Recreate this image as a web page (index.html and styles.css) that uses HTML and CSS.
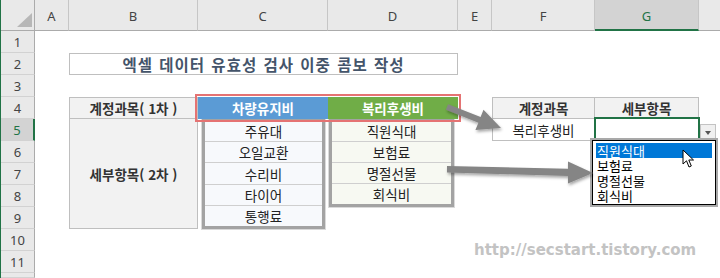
FILE: index.html
```html
<!DOCTYPE html>
<html lang="ko">
<head>
  <meta charset="UTF-8" />
  <title>엑셀 데이터 유효성 검사 이중 콤보 작성</title>
  <link rel="stylesheet" href="styles.css">
</head>
<body>

  <div class="sheet">
    <!-- column headers -->
    <div class="corner"><span class="tri"></span></div>
    <div class="colhead">A</div>
    <div class="colhead">B</div>
    <div class="colhead">C</div>
    <div class="colhead">D</div>
    <div class="colhead">E</div>
    <div class="colhead">F</div>
    <div class="colhead active">G</div>
    <div class="colhead filler"></div>

    <!-- row headers -->
    <div class="rowhead r1">1</div>
    <div class="rowhead r2">2</div>
    <div class="rowhead r3">3</div>
    <div class="rowhead r4">4</div>
    <div class="rowhead r5 active">5</div>
    <div class="rowhead r6">6</div>
    <div class="rowhead r7">7</div>
    <div class="rowhead r8">8</div>
    <div class="rowhead r9">9</div>
    <div class="rowhead r10">10</div>
    <div class="rowhead r11">11</div>
    <div class="rowhead r12"></div>

    <div class="title">엑셀 데이터 유효성 검사 이중 콤보 작성</div>

    <div class="cell label lvl1">계정과목( 1차 )</div>
    <div class="cell label lvl2">세부항목( 2차 )</div>

    <div class="heads">
      <div class="cell head blue">차량유지비</div>
      <div class="cell head green">복리후생비</div>
    </div>

    <div class="list list-c">
      <div class="item">주유대</div>
      <div class="item">오일교환</div>
      <div class="item">수리비</div>
      <div class="item">타이어</div>
      <div class="item">통행료</div>
    </div>

    <div class="list list-d">
      <div class="item">직원식대</div>
      <div class="item">보험료</div>
      <div class="item">명절선물</div>
      <div class="item">회식비</div>
    </div>

    <div class="cell label f4">계정과목</div>
    <div class="cell label g4">세부항목</div>
    <div class="cell f5">복리후생비</div>
    <div class="cell g5">
      <span class="dd-btn"><span class="dd-caret"></span></span>
      <div class="dropdown">
        <div class="opt sel">직원식대</div>
        <div class="opt">보험료</div>
        <div class="opt">명절선물</div>
        <div class="opt">회식비</div>
      </div>
      <svg class="cursor" width="13" height="20" viewBox="0 0 13 20">
        <path d="M1 1 L1 15 L4.5 11.8 L7 18 L9.3 17 L6.8 11 L11.5 11 Z" fill="#fff" stroke="#000" stroke-width="1" stroke-linejoin="round"/>
      </svg>
    </div>

    <svg class="arrows" width="720" height="278" viewBox="0 0 720 278">
      <defs>
        <filter id="sh" x="-20%" y="-40%" width="140%" height="180%">
          <feDropShadow dx="1" dy="2" stdDeviation="1.5" flood-color="#000" flood-opacity="0.35"/>
        </filter>
      </defs>
      <polygon filter="url(#sh)" fill="#858585"
        points="448.1,104.2 480.6,117.1 483.5,109.7 501,128 475.4,130.1 478.4,122.7 445.9,109.8"/>
      <polygon filter="url(#sh)" fill="#858585"
        points="447,166 568,168.8 568,161.5 593,173 568,183.5 568,176 447,172.5"/>
    </svg>

    <div class="watermark">http://secstart.tistory.com</div>
  </div>

</body>
</html>
```

FILE: styles.css
```css
:root {
  --head-bg: #e9e9e9;
  --head-line: #c6c6c6;
  --cell-line: #bfbfbf;
  --excel-green: #217346;
}

* {
  box-sizing: border-box;
}

body {
  margin: 0;
  background: #fff;
  font-family: "Noto Sans CJK KR", "Noto Sans", sans-serif;
}

.sheet {
  position: relative;
  width: 720px;
  height: 278px;
  overflow: hidden;
  display: grid;
  grid-template-columns: 34px 34px 129px 130px 130px 34px 103px 104px 1fr;
  grid-template-rows: 31px repeat(11, 22px) 1fr;
  border-left: 1px solid var(--excel-green);
  color: #222;
}

/* headers */
.corner,
.colhead {
  background: var(--head-bg);
  border-right: 1px solid var(--head-line);
  border-bottom: 1px solid #ababab;
  font-family: "Noto Sans", sans-serif;
  font-size: 13px;
  color: #444;
  display: flex;
  align-items: center;
  justify-content: center;
  padding-top: 2px;
}

.corner {
  position: relative;
  border-right: 1px solid #ababab;
}

.tri {
  position: absolute;
  right: 2px;
  bottom: 3px;
  width: 0;
  height: 0;
  border-left: 15px solid transparent;
  border-bottom: 14px solid #b7b7b7;
}

.colhead.active {
  background: #d3d3d3;
  color: var(--excel-green);
  border-bottom: 2px solid var(--excel-green);
}

.colhead.filler {
  border-right: none;
}

.rowhead {
  grid-column: 1;
  background: var(--head-bg);
  border-right: 1px solid #ababab;
  border-bottom: 1px solid #d2d2d2;
  font-family: "Noto Sans", sans-serif;
  font-size: 13px;
  color: #444;
  display: flex;
  align-items: center;
  justify-content: center;
}

.rowhead.active {
  background: #d3d3d3;
  color: var(--excel-green);
  border-right: 2px solid var(--excel-green);
}

.r1 { grid-row: 2; }
.r2 { grid-row: 3; }
.r3 { grid-row: 4; }
.r4 { grid-row: 5; }
.r5 { grid-row: 6; }
.r6 { grid-row: 7; }
.r7 { grid-row: 8; }
.r8 { grid-row: 9; }
.r9 { grid-row: 10; }
.r10 { grid-row: 11; }
.r11 { grid-row: 12; }
.r12 { grid-row: 13; }

/* cells */
.cell {
  display: flex;
  align-items: center;
  justify-content: center;
  font-size: 13.5px;
  white-space: nowrap;
}

.title {
  grid-row: 3;
  grid-column: 3 / 6;
  border: 1px solid var(--cell-line);
  display: flex;
  align-items: center;
  justify-content: center;
  font-size: 15.5px;
  font-weight: 700;
  letter-spacing: 1px;
  word-spacing: 1px;
  color: #44546a;
}

.label {
  background: #f2f2f2;
  border: 1px solid var(--cell-line);
  font-weight: 700;
  color: #333;
}

.lvl1 {
  grid-row: 5;
  grid-column: 3;
}

.lvl2 {
  grid-row: 6 / 11;
  grid-column: 3;
  border-top: none;
}

.heads {
  grid-row: 5;
  grid-column: 4 / 6;
  display: grid;
  grid-template-columns: 130px 130px;
  outline: 2px solid #e57373;
  outline-offset: 1px;
  z-index: 2;
}

.head {
  color: #fff;
  font-weight: 700;
}

.head.blue {
  background: #5b9bd5;
}

.head.green {
  background: #70ad47;
}

.list {
  display: flex;
  flex-direction: column;
  border: 3px solid #a3a3a3;
  box-shadow: 0 0 0 1px #dadada;
  margin-top: -1px;
}

.list-c {
  grid-row: 6 / 11;
  grid-column: 4;
  margin-left: 4px;
  margin-right: 3px;
  background: #f7f9fc;
}

.list-d {
  grid-row: 6 / 10;
  grid-column: 5;
  margin-left: 1px;
  margin-right: 4px;
  background: #f7f9f2;
}

.item {
  flex: 1;
  display: flex;
  align-items: center;
  justify-content: center;
  font-size: 13.5px;
  border-bottom: 1px solid #cfcfcf;
}

.item:last-child {
  border-bottom: none;
}

.f4 {
  grid-row: 5;
  grid-column: 7;
}

.g4 {
  grid-row: 5;
  grid-column: 8;
  border-left: none;
}

.f5 {
  grid-row: 6;
  grid-column: 7;
  border: 1px solid var(--cell-line);
  border-top: none;
}

.g5 {
  grid-row: 6;
  grid-column: 8;
  position: relative;
  outline: 2px solid var(--excel-green);
  outline-offset: -1px;
  margin-top: -1px;
  margin-bottom: 1px;
  z-index: 3;
}

.dd-btn {
  position: absolute;
  right: -17px;
  bottom: -1px;
  width: 16px;
  height: 17px;
  background: #f0f0f0;
  border: 1px solid #c3c3c3;
  display: flex;
  align-items: center;
  justify-content: center;
}

.dd-caret {
  width: 0;
  height: 0;
  border-left: 3.5px solid transparent;
  border-right: 3.5px solid transparent;
  border-top: 4px solid #555;
}

.dropdown {
  position: absolute;
  left: -3px;
  top: 22px;
  width: 124px;
  height: 65px;
  border: 1px solid #000;
  box-shadow: 0 0 0 2px #a9a9a9;
  background: #fff;
  padding: 2px 3px;
}

.opt {
  height: 15px;
  font-size: 13px;
  line-height: 15px;
  padding-left: 1px;
  color: #000;
}

.opt.sel {
  background: #0078d7;
  color: #fff;
}

.cursor {
  position: absolute;
  left: 87px;
  top: 31px;
}

.arrows {
  position: absolute;
  left: -1px;
  top: 0;
  pointer-events: none;
  z-index: 4;
}

.watermark {
  position: absolute;
  left: 473px;
  top: 241px;
  font-family: "DejaVu Sans", sans-serif;
  font-weight: 700;
  font-size: 15px;
  color: #c3c3c3;
  white-space: nowrap;
}
```
